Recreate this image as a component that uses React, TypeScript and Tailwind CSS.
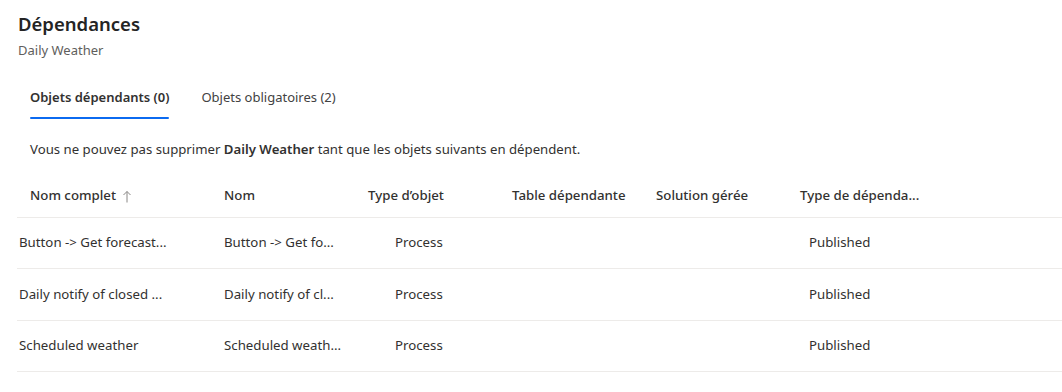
const rows = [
  { full: "Button -> Get forecast...", name: "Button -> Get fo...", type: "Process", dep: "Published" },
  { full: "Daily notify of closed ...", name: "Daily notify of cl...", type: "Process", dep: "Published" },
  { full: "Scheduled weather", name: "Scheduled weath...", type: "Process", dep: "Published" },
];

const font = { fontFamily: '"Noto Sans", "Open Sans", sans-serif' };

function SortUp() {
  return (
    <svg width="10" height="13" viewBox="0 0 10 13" className="ml-[6px] text-[#8a8886]">
      <path d="M5 1.5 V12.5 M1.5 5 L5 1.5 L8.5 5" fill="none" stroke="currentColor" strokeWidth="1" />
    </svg>
  );
}

export default function App() {
  return (
    <div className="w-[1062px] h-[392px] overflow-hidden bg-white text-[#323130]" style={font}>
      <div className="pl-[18px] pt-[10px]">
        <h1 className="text-[18.5px] leading-[28px] font-semibold text-[#242424]">Dépendances</h1>
        <p className="mt-[3px] text-[13px] leading-[18px] text-[#605e5c]">Daily Weather</p>
      </div>

      <div className="flex gap-[24px] pl-[26px] mt-[20px]">
        <div className="h-[40px] px-[4px] flex flex-col">
          <span className="flex-1 flex items-center text-[13px] font-semibold text-[#323130] whitespace-nowrap">
            Objets dépendants (0)
          </span>
          <div className="h-[2px] bg-[#0b6af0] rounded-full" />
        </div>
        <div className="h-[40px] px-[4px] flex flex-col">
          <span className="flex-1 flex items-center text-[13px] text-[#424242] whitespace-nowrap">
            Objets obligatoires (2)
          </span>
          <div className="h-[2px]" />
        </div>
      </div>

      <p className="pl-[30px] mt-[21px] text-[13.2px] leading-[18px] text-[#323130]">
        Vous ne pouvez pas supprimer <b className="font-semibold">Daily Weather</b> tant que les objets suivants en dépendent.
      </p>

      <div className="ml-[17px] mt-[17px] text-[13.25px]">
        <div className="h-[43px] flex items-center border-b border-[#edebe9] font-medium text-[#323130]">
          <div className="w-[195px] pl-[13px] flex items-center">
            Nom complet
            <SortUp />
          </div>
          <div className="w-[144px] pl-[12px]">Nom</div>
          <div className="w-[144px] pl-[12px]">Type d’objet</div>
          <div className="w-[144px] pl-[12px]">Table dépendante</div>
          <div className="w-[144px] pl-[12px]">Solution gérée</div>
          <div className="w-[144px] pl-[12px] whitespace-nowrap">Type de dépenda...</div>
        </div>
        {rows.map((r) => (
          <div key={r.full} className="h-[51.35px] flex items-center border-b border-[#edebe9] text-[#323130]">
            <div className="w-[195px] pl-[2px] whitespace-nowrap">{r.full}</div>
            <div className="w-[144px] pl-[12px] whitespace-nowrap">{r.name}</div>
            <div className="w-[144px] pl-[39px]">{r.type}</div>
            <div className="w-[144px]" />
            <div className="w-[144px]" />
            <div className="w-[144px] pl-[21px]">{r.dep}</div>
          </div>
        ))}
      </div>
    </div>
  );
}
